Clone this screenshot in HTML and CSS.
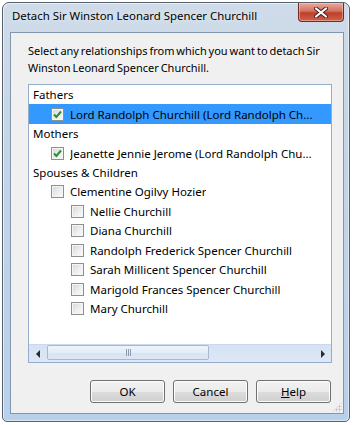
FILE: index.html
```html
<!DOCTYPE html>
<html lang="en">

<head>
    <meta charset="UTF-8">
    <meta name="viewport" content="width=device-width, initial-scale=1.0">
    <title>Detach Relationships</title>
    <link rel="stylesheet" href="styles.css">
</head>

<body>
    <div class="window">
        <div class="titlebar">
            <span class="title">Detach Sir Winston Leonard Spencer Churchill</span>
            <button class="close-btn" aria-label="Close">
                <svg width="14" height="11" viewBox="0 0 14 11">
                    <path d="M2 1.5 L12 9.5 M12 1.5 L2 9.5" stroke="#3a2420" stroke-width="4" stroke-linecap="round" />
                    <path d="M2 1.5 L12 9.5 M12 1.5 L2 9.5" stroke="#ffffff" stroke-width="2.2" stroke-linecap="round" />
                </svg>
            </button>
        </div>

        <div class="client">
            <p class="prompt">Select any relationships from which you want to detach Sir<br>Winston Leonard Spencer Churchill.</p>

            <div class="listbox">
                <ul class="tree">
                    <li class="row group">Fathers</li>
                    <li class="row level-1 selected">
                        <span class="check checked"><svg width="11" height="11" viewBox="0 0 11 11"><path d="M2 5.5 L4.4 8 L9 2.5" fill="none" stroke="#2f8f2f" stroke-width="2" /></svg></span>
                        <span class="label">Lord Randolph Churchill (Lord Randolph Ch...</span>
                    </li>
                    <li class="row group">Mothers</li>
                    <li class="row level-1">
                        <span class="check checked"><svg width="11" height="11" viewBox="0 0 11 11"><path d="M2 5.5 L4.4 8 L9 2.5" fill="none" stroke="#2f8f2f" stroke-width="2" /></svg></span>
                        <span class="label">Jeanette Jennie Jerome (Lord Randolph Chu...</span>
                    </li>
                    <li class="row group">Spouses &amp; Children</li>
                    <li class="row level-1"><span class="check"></span><span class="label">Clementine Ogilvy Hozier</span></li>
                    <li class="row level-2"><span class="check"></span><span class="label">Nellie Churchill</span></li>
                    <li class="row level-2"><span class="check"></span><span class="label">Diana Churchill</span></li>
                    <li class="row level-2"><span class="check"></span><span class="label">Randolph Frederick Spencer Churchill</span></li>
                    <li class="row level-2"><span class="check"></span><span class="label">Sarah Millicent Spencer Churchill</span></li>
                    <li class="row level-2"><span class="check"></span><span class="label">Marigold Frances Spencer Churchill</span></li>
                    <li class="row level-2"><span class="check"></span><span class="label">Mary Churchill</span></li>
                </ul>

                <div class="hscroll">
                    <span class="scroll-btn"><span class="arrow-left"></span></span>
                    <div class="track">
                        <div class="thumb"><span class="thumb-grip"></span></div>
                    </div>
                    <span class="scroll-btn"><span class="arrow-right"></span></span>
                </div>
            </div>

            <div class="buttons">
                <button class="btn">OK</button>
                <button class="btn">Cancel</button>
                <button class="btn"><u>H</u>elp</button>
            </div>

            <span class="size-grip"></span>
        </div>
    </div>
</body>

</html>
```

FILE: styles.css
```css
/*css*/
body {
    margin: 0;
    background: #ffffff;
    font-family: "Noto Sans", "Open Sans", sans-serif;
    font-size: 11.5px;
    color: #000000;
}

.window {
    margin: 2px 3px 0 2px;
    height: 420px;
    box-sizing: border-box;
    border: 1px solid #55606c;
    border-radius: 7px 7px 5px 5px;
    background: linear-gradient(to bottom, #cfdbe8 0%, #c3d4e6 40%, #b8d0ea 100%);
    box-shadow: inset 1px 1px 0 rgba(255, 255, 255, 0.6), inset -1px -1px 0 rgba(255, 255, 255, 0.5);
    padding: 0 5px 7px 7px;
    display: flex;
    flex-direction: column;
}

.titlebar {
    height: 29px;
    display: flex;
    align-items: flex-start;
    flex-shrink: 0;
}

.title {
    padding: 5px 0 0 2px;
    font-size: 11.4px;
    color: #000000;
    text-shadow: 0 0 6px rgba(255, 255, 255, 0.9);
}

.close-btn {
    margin-left: auto;
    width: 46px;
    height: 19px;
    padding: 0;
    border: 1px solid #6e2b22;
    border-top: none;
    border-radius: 0 0 4px 4px;
    background: linear-gradient(to bottom, #e9a99b 0%, #d4715f 45%, #bf3f2a 55%, #d0604a 100%);
    box-shadow: inset 0 0 0 1px rgba(255, 220, 210, 0.45);
    display: flex;
    align-items: center;
    justify-content: center;
}

.client {
    position: relative;
    flex: 1;
    background-color: #f0f0f0;
    border: 1px solid #8396b0;
    padding: 9px 11px 10px 17px;
    display: flex;
    flex-direction: column;
}

.prompt {
    margin: 0 0 8px 0;
    font-size: 11px;
    line-height: 17px;
    word-spacing: -1px;
    white-space: nowrap;
}

.listbox {
    height: 279px;
    box-sizing: border-box;
    border: 1px solid #95aecd;
    background-color: #ffffff;
    display: flex;
    flex-direction: column;
}

.tree {
    flex: 1;
    list-style: none;
    margin: 0;
    padding: 0;
}

.row {
    height: 19.45px;
    display: flex;
    align-items: center;
    white-space: nowrap;
    overflow: hidden;
}

.group {
    padding-left: 4px;
}

.level-1 {
    padding-left: 22px;
}

.level-2 {
    padding-left: 42px;
}

.selected {
    background-color: #3399ff;
}

.check {
    width: 11px;
    height: 11px;
    flex-shrink: 0;
    margin-right: 6px;
    border: 1px solid #8e8f8f;
    background: linear-gradient(135deg, #d3d6db 0%, #eef0f2 60%, #f8f8f8 100%);
    box-shadow: inset 0 0 0 1px #f5f5f5;
    display: flex;
}

.label {
    overflow: hidden;
}

.hscroll {
    height: 17px;
    display: flex;
    background: linear-gradient(to bottom, #d6e2f3, #dde7f5);
    border-top: 1px solid #cbd9ee;
}

.scroll-btn {
    width: 17px;
    display: flex;
    align-items: center;
    justify-content: center;
}

.arrow-left {
    border-top: 4px solid transparent;
    border-bottom: 4px solid transparent;
    border-right: 4px solid #2b2b2b;
}

.arrow-right {
    border-top: 4px solid transparent;
    border-bottom: 4px solid transparent;
    border-left: 4px solid #2b2b2b;
}

.track {
    flex: 1;
    padding: 0 1px;
}

.thumb {
    width: 162px;
    height: 15px;
    box-sizing: border-box;
    border: 1px solid #a5b9d4;
    border-radius: 2px;
    background: linear-gradient(to bottom, #eef3fa 0%, #e4ecf7 50%, #d8e3f2 51%, #dde7f4 100%);
    display: flex;
    align-items: center;
    justify-content: center;
}

.thumb-grip {
    width: 5px;
    height: 7px;
    background: repeating-linear-gradient(to right, #8a9bb2 0, #8a9bb2 1px, transparent 1px, transparent 2px);
}

.buttons {
    margin-top: auto;
    margin-right: 1px;
    display: flex;
    justify-content: flex-end;
    gap: 8px;
}

.btn {
    width: 75px;
    height: 23px;
    padding: 0;
    font-family: inherit;
    font-size: 11.5px;
    color: #000000;
    border: 1px solid #707070;
    border-radius: 3px;
    background: linear-gradient(to bottom, #f2f2f2 0%, #ebebeb 50%, #dddddd 51%, #cfcfcf 100%);
    box-shadow: inset 0 0 0 1px #fcfcfc;
}

.size-grip {
    position: absolute;
    right: 1px;
    bottom: 1px;
    width: 10px;
    height: 10px;
    background:
        radial-gradient(circle, #b5bcc6 0.8px, transparent 1.2px) 0 0 / 3px 3px;
    clip-path: polygon(100% 0, 100% 100%, 0 100%);
}
```
